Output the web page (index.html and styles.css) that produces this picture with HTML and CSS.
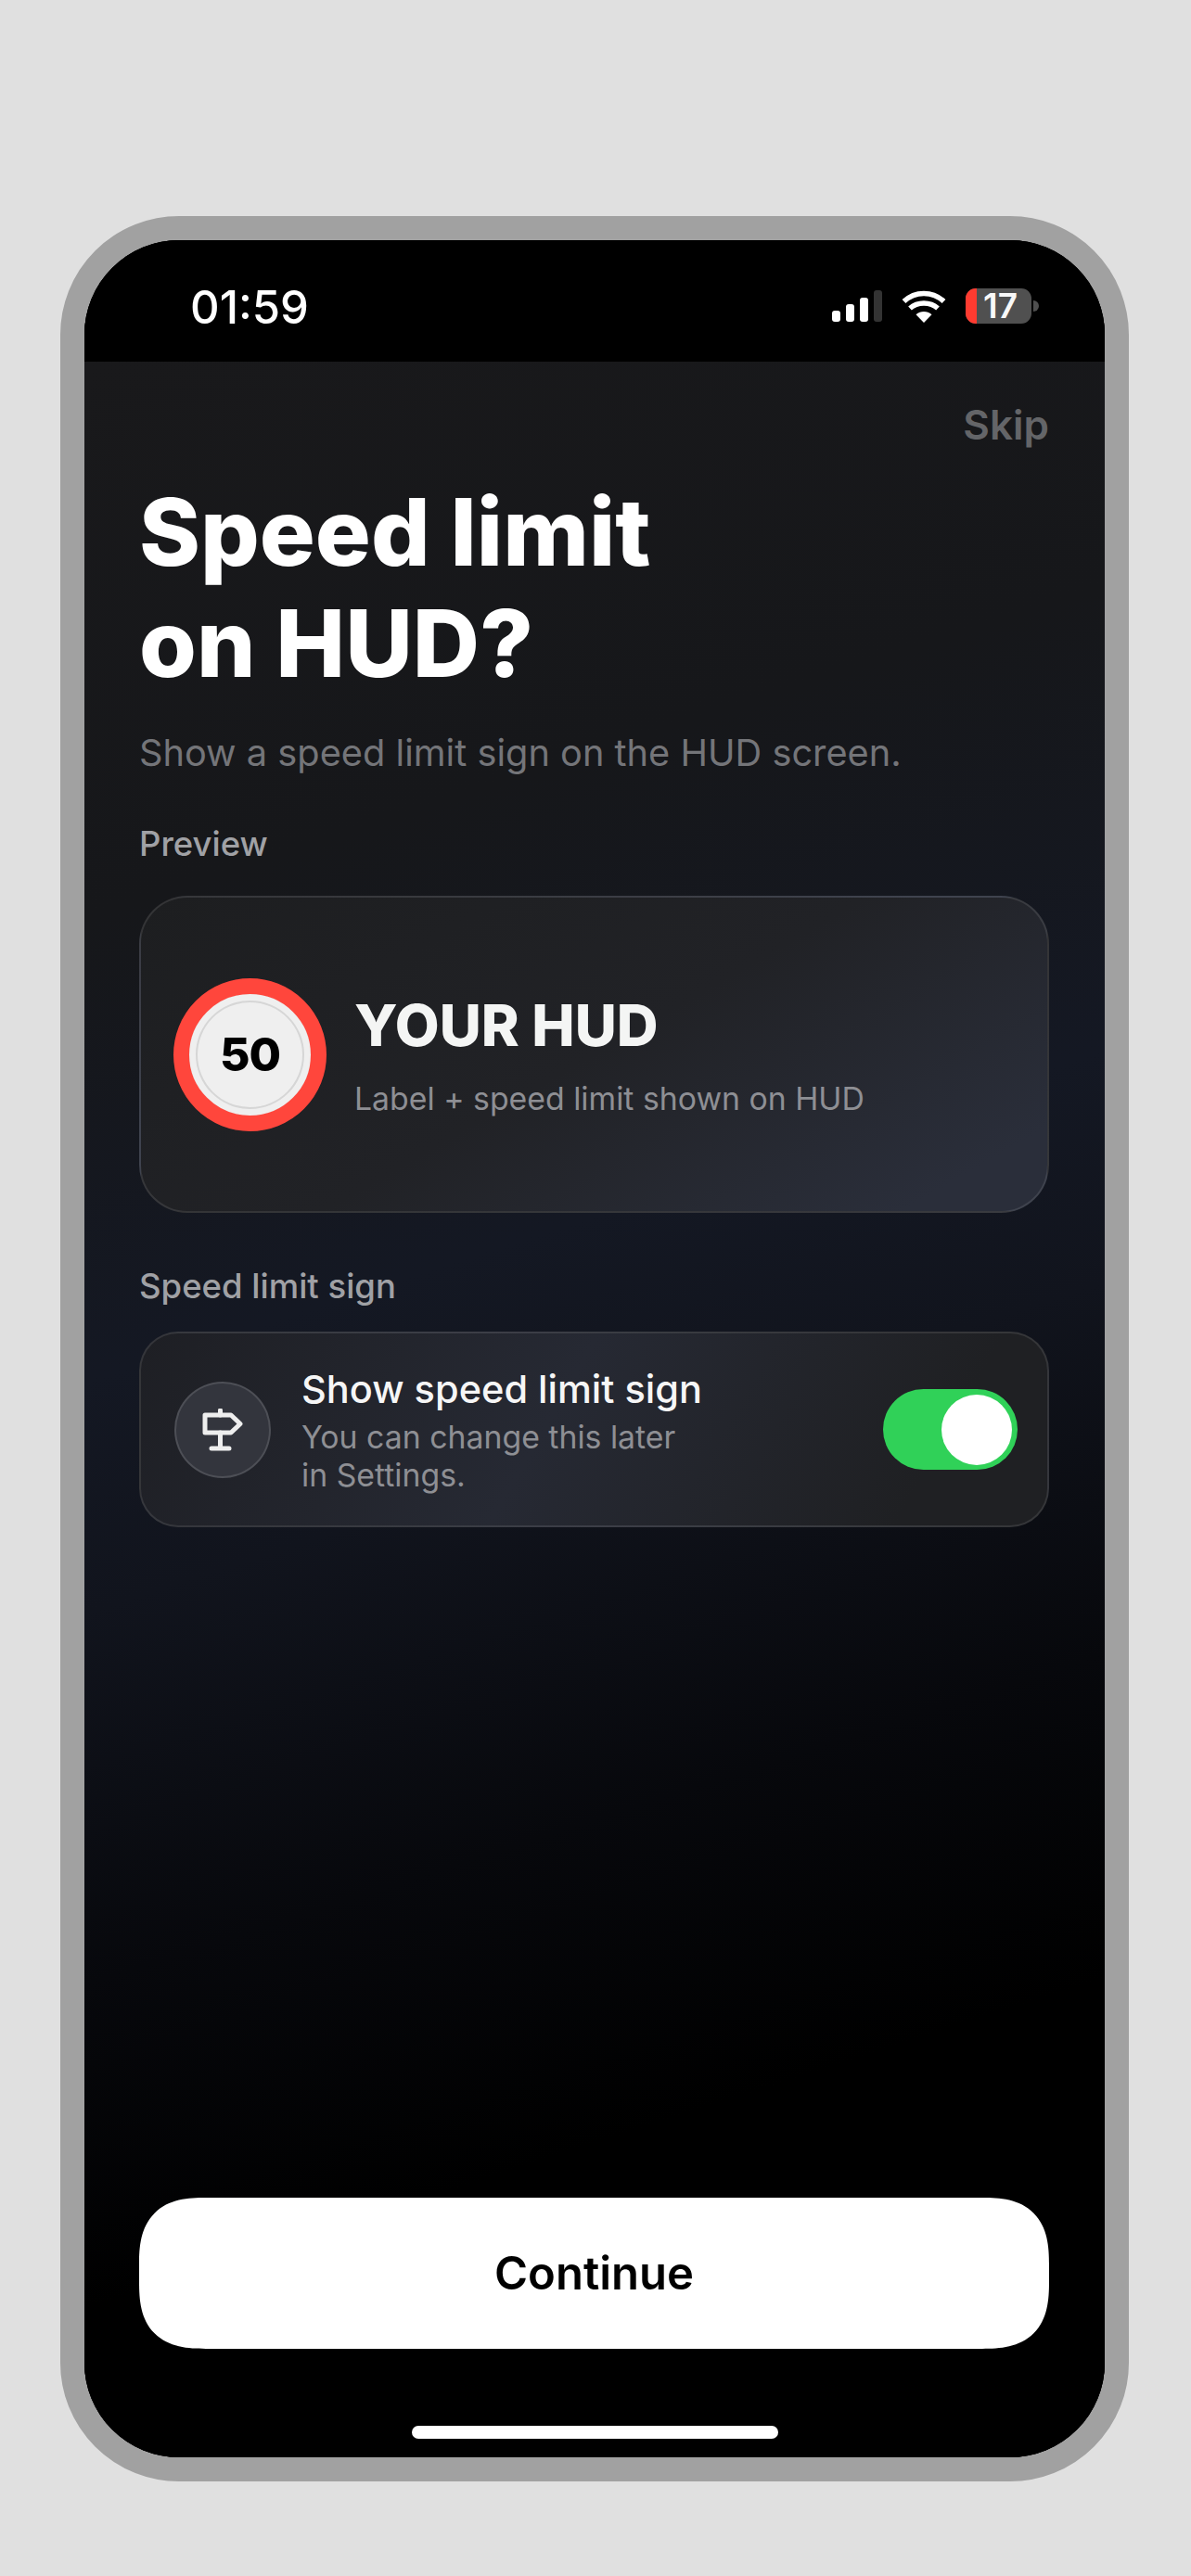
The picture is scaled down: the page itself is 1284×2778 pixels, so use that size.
FILE: index.html
```html
<!DOCTYPE html>
<html lang="en">
<head>
    <meta charset="UTF-8">
    <meta name="viewport" content="width=device-width, initial-scale=1.0">
    <title>Speed limit on HUD?</title>
    <link rel="stylesheet" href="styles.css">
</head>
<body>

    <div class="phone">
        <div class="screen">

            <!-- Status bar -->
            <div class="status-bar">
                <span class="time">01:59</span>
                <div class="status-icons">
                    <div class="signal">
                        <span class="bar bar-1"></span>
                        <span class="bar bar-2"></span>
                        <span class="bar bar-3"></span>
                        <span class="bar bar-4"></span>
                    </div>
                    <svg class="wifi" width="48" height="35" viewBox="0 0 48 35">
                        <path d="M24 35 L15.5 26.2 C20.5 22 27.500 22 32.500 26.200 Z" fill="#fff"/>
                        <path d="M9 19.500 C17 12.300 31 12.300 39 19.500" fill="none" stroke="#fff" stroke-width="5.500"/>
                        <path d="M2.500 12 C14.500 0.500 33.500 0.500 45.500 12" fill="none" stroke="#fff" stroke-width="5.500"/>
                    </svg>
                    <div class="battery">
                        <span class="battery-level"></span>
                        <span class="battery-text">17</span>
                    </div>
                    <span class="battery-tip"></span>
                </div>
            </div>

            <div class="content">
                <div class="skip">Skip</div>
                <h1>Speed limit<br>on HUD?</h1>
                <p class="subtitle">Show a speed limit sign on the HUD screen.</p>

                <!-- Preview -->
                <div class="section-label preview-label">Preview</div>
                <div class="card preview-card">
                    <div class="limit-sign"><span>50</span></div>
                    <div class="preview-text">
                        <div class="preview-title">YOUR HUD</div>
                        <div class="preview-desc">Label + speed limit shown on HUD</div>
                    </div>
                </div>

                <!-- Option -->
                <div class="section-label option-label">Speed limit sign</div>
                <div class="card option-card">
                    <div class="option-icon">
                        <svg width="44" height="46" viewBox="0 0 44 46" fill="none" stroke="#eeeeee" stroke-width="5" stroke-linecap="round" stroke-linejoin="round">
                            <path d="M3 7 H31 L41 16.500 L31 26 H3 Z"/>
                            <path d="M19.500 2 V7 M19.500 26 V43 M10 43 H29"/>
                        </svg>
                    </div>
                    <div class="option-text">
                        <div class="option-title">Show speed limit sign</div>
                        <div class="option-desc">You can change this later<br>in Settings.</div>
                    </div>
                    <div class="toggle"><span class="knob"></span></div>
                </div>

                <button class="continue">Continue</button>
            </div>

            <div class="home-area"><span class="home-bar"></span></div>
        </div>
    </div>

</body>
</html>
```
FILE: styles.css
```css
* {
    box-sizing: border-box;
}

body {
    margin: 0;
    padding: 233px 67px 102px 65px;
    height: 2778px;
    background-color: #e0e0e0;
    font-family: Inter, "Liberation Sans", sans-serif;
}

.phone {
    height: 100%;
    border: 26px solid #a1a1a1;
    border-radius: 128px;
    background-color: #000;
}

.screen {
    height: 100%;
    border-radius: 102px;
    overflow: hidden;
    display: flex;
    flex-direction: column;
    background-color: #000;
}

/* Status bar */
.status-bar {
    height: 131px;
    flex-shrink: 0;
    padding: 14px 71px 0 114px;
    display: flex;
    align-items: center;
    justify-content: space-between;
    background-color: #000;
    color: #fff;
}

.time {
    font-size: 49px;
    font-weight: 500;
}

.status-icons {
    display: flex;
    align-items: center;
    margin-bottom: 3px;
}

.signal {
    display: flex;
    align-items: flex-end;
    gap: 6px;
    height: 34px;
    margin-right: 21px;
}

.bar {
    width: 9px;
    background-color: #fff;
    border-radius: 3px;
}

.bar-1 { height: 12px; }
.bar-2 { height: 19px; }
.bar-3 { height: 26px; }
.bar-4 { height: 34px; background-color: #333; }

.wifi {
    margin-right: 21px;
}

.battery {
    position: relative;
    width: 71px;
    height: 38px;
    border-radius: 11px;
    background-color: #505050;
    display: flex;
    align-items: center;
    justify-content: center;
}

.battery-level {
    position: absolute;
    left: 0;
    top: 0;
    bottom: 0;
    width: 12px;
    border-radius: 11px 0 0 11px;
    background-color: #ff3b30;
}

.battery-text {
    position: relative;
    padding-left: 4px;
    font-size: 37px;
    font-weight: 600;
    line-height: 38px;
    color: #f8f8f8;
}

.battery-tip {
    width: 6px;
    height: 12px;
    margin-left: 2px;
    border-radius: 0 6px 6px 0;
    background-color: #505050;
}

/* Main content */
.content {
    flex: 1;
    min-height: 0;
    padding: 44px 60px 0 59px;
    display: flex;
    flex-direction: column;
    background: linear-gradient(162deg, #19191b 0%, #16171a 24%, #141823 44%, #11141d 54%, #07080c 70%, #000 84%);
}

.skip {
    align-self: flex-end;
    font-size: 44px;
    font-weight: 600;
    line-height: 48px;
    color: #646568;
}

h1 {
    margin: 32px 0 0;
    font-size: 100px;
    font-weight: 800;
    line-height: 120px;
    color: #fff;
}

.subtitle {
    margin: 33px 0 0;
    font-size: 39.75px;
    line-height: 50px;
    color: #747579;
}

.section-label {
    font-size: 36.500px;
    font-weight: 500;
    line-height: 44px;
    color: #a0a1a5;
}

.preview-label {
    margin-top: 51px;
}

.option-label {
    margin-top: 57px;
}

.card {
    border: 2px solid rgba(255, 255, 255, 0.1);
    display: flex;
    align-items: center;
}

.preview-card {
    height: 342px;
    margin-top: 34px;
    padding-left: 35px;
    border-radius: 52px;
    background: linear-gradient(150deg, #1d1e20 0%, #212226 50%, #2a2e3a 90%);
}

.limit-sign {
    width: 165px;
    height: 165px;
    flex-shrink: 0;
    border: 17px solid #ff463c;
    border-radius: 50%;
    background-color: #efefef;
    box-shadow: inset 0 0 0 7px #efefef, inset 0 0 0 9px #d6d6d6;
    display: flex;
    align-items: center;
    justify-content: center;
    font-size: 50px;
    font-weight: 800;
    letter-spacing: -1px;
    color: #000;
}

.preview-text {
    margin-left: 30px;
}

.preview-title {
    font-size: 62px;
    font-weight: 800;
    line-height: 72px;
    color: #f4f5f4;
}

.preview-desc {
    margin-top: 23px;
    font-size: 33.800px;
    line-height: 40px;
    color: #8e8f94;
}

.option-card {
    height: 211px;
    margin-top: 27px;
    padding: 0 32px 0 36px;
    border-radius: 42px;
    background: linear-gradient(120deg, #1e1f24 0%, #262933 45%, #1f2023 85%);
}

.option-icon {
    width: 104px;
    height: 104px;
    flex-shrink: 0;
    border: 2px solid rgba(255, 255, 255, 0.13);
    border-radius: 50%;
    background-color: #33353d;
    display: flex;
    align-items: center;
    justify-content: center;
}

.option-text {
    flex: 1;
    margin-left: 33px;
}

.option-title {
    font-size: 41.500px;
    font-weight: 500;
    line-height: 50px;
    color: #f6f6f6;
}

.option-desc {
    margin-top: 6px;
    font-size: 33.800px;
    line-height: 41px;
    color: #8e8f94;
}

.toggle {
    width: 145px;
    height: 87px;
    flex-shrink: 0;
    padding-right: 6px;
    border-radius: 44px;
    background-color: #30d158;
    display: flex;
    align-items: center;
    justify-content: flex-end;
}

.knob {
    width: 76px;
    height: 76px;
    border-radius: 50%;
    background-color: #fff;
}

.continue {
    height: 163px;
    margin-top: auto;
    margin-bottom: 0;
    border: none;
    border-radius: 72px;
    corner-shape: superellipse(1.400);
    background-color: #fff;
    font-family: inherit;
    font-size: 49px;
    font-weight: 600;
    color: #000;
}

/* Home indicator */
.home-area {
    height: 117px;
    flex-shrink: 0;
    padding-top: 83px;
    display: flex;
    justify-content: center;
    background-color: #000;
}

.home-bar {
    width: 395px;
    height: 14px;
    border-radius: 7px;
    background-color: #fff;
}
```
